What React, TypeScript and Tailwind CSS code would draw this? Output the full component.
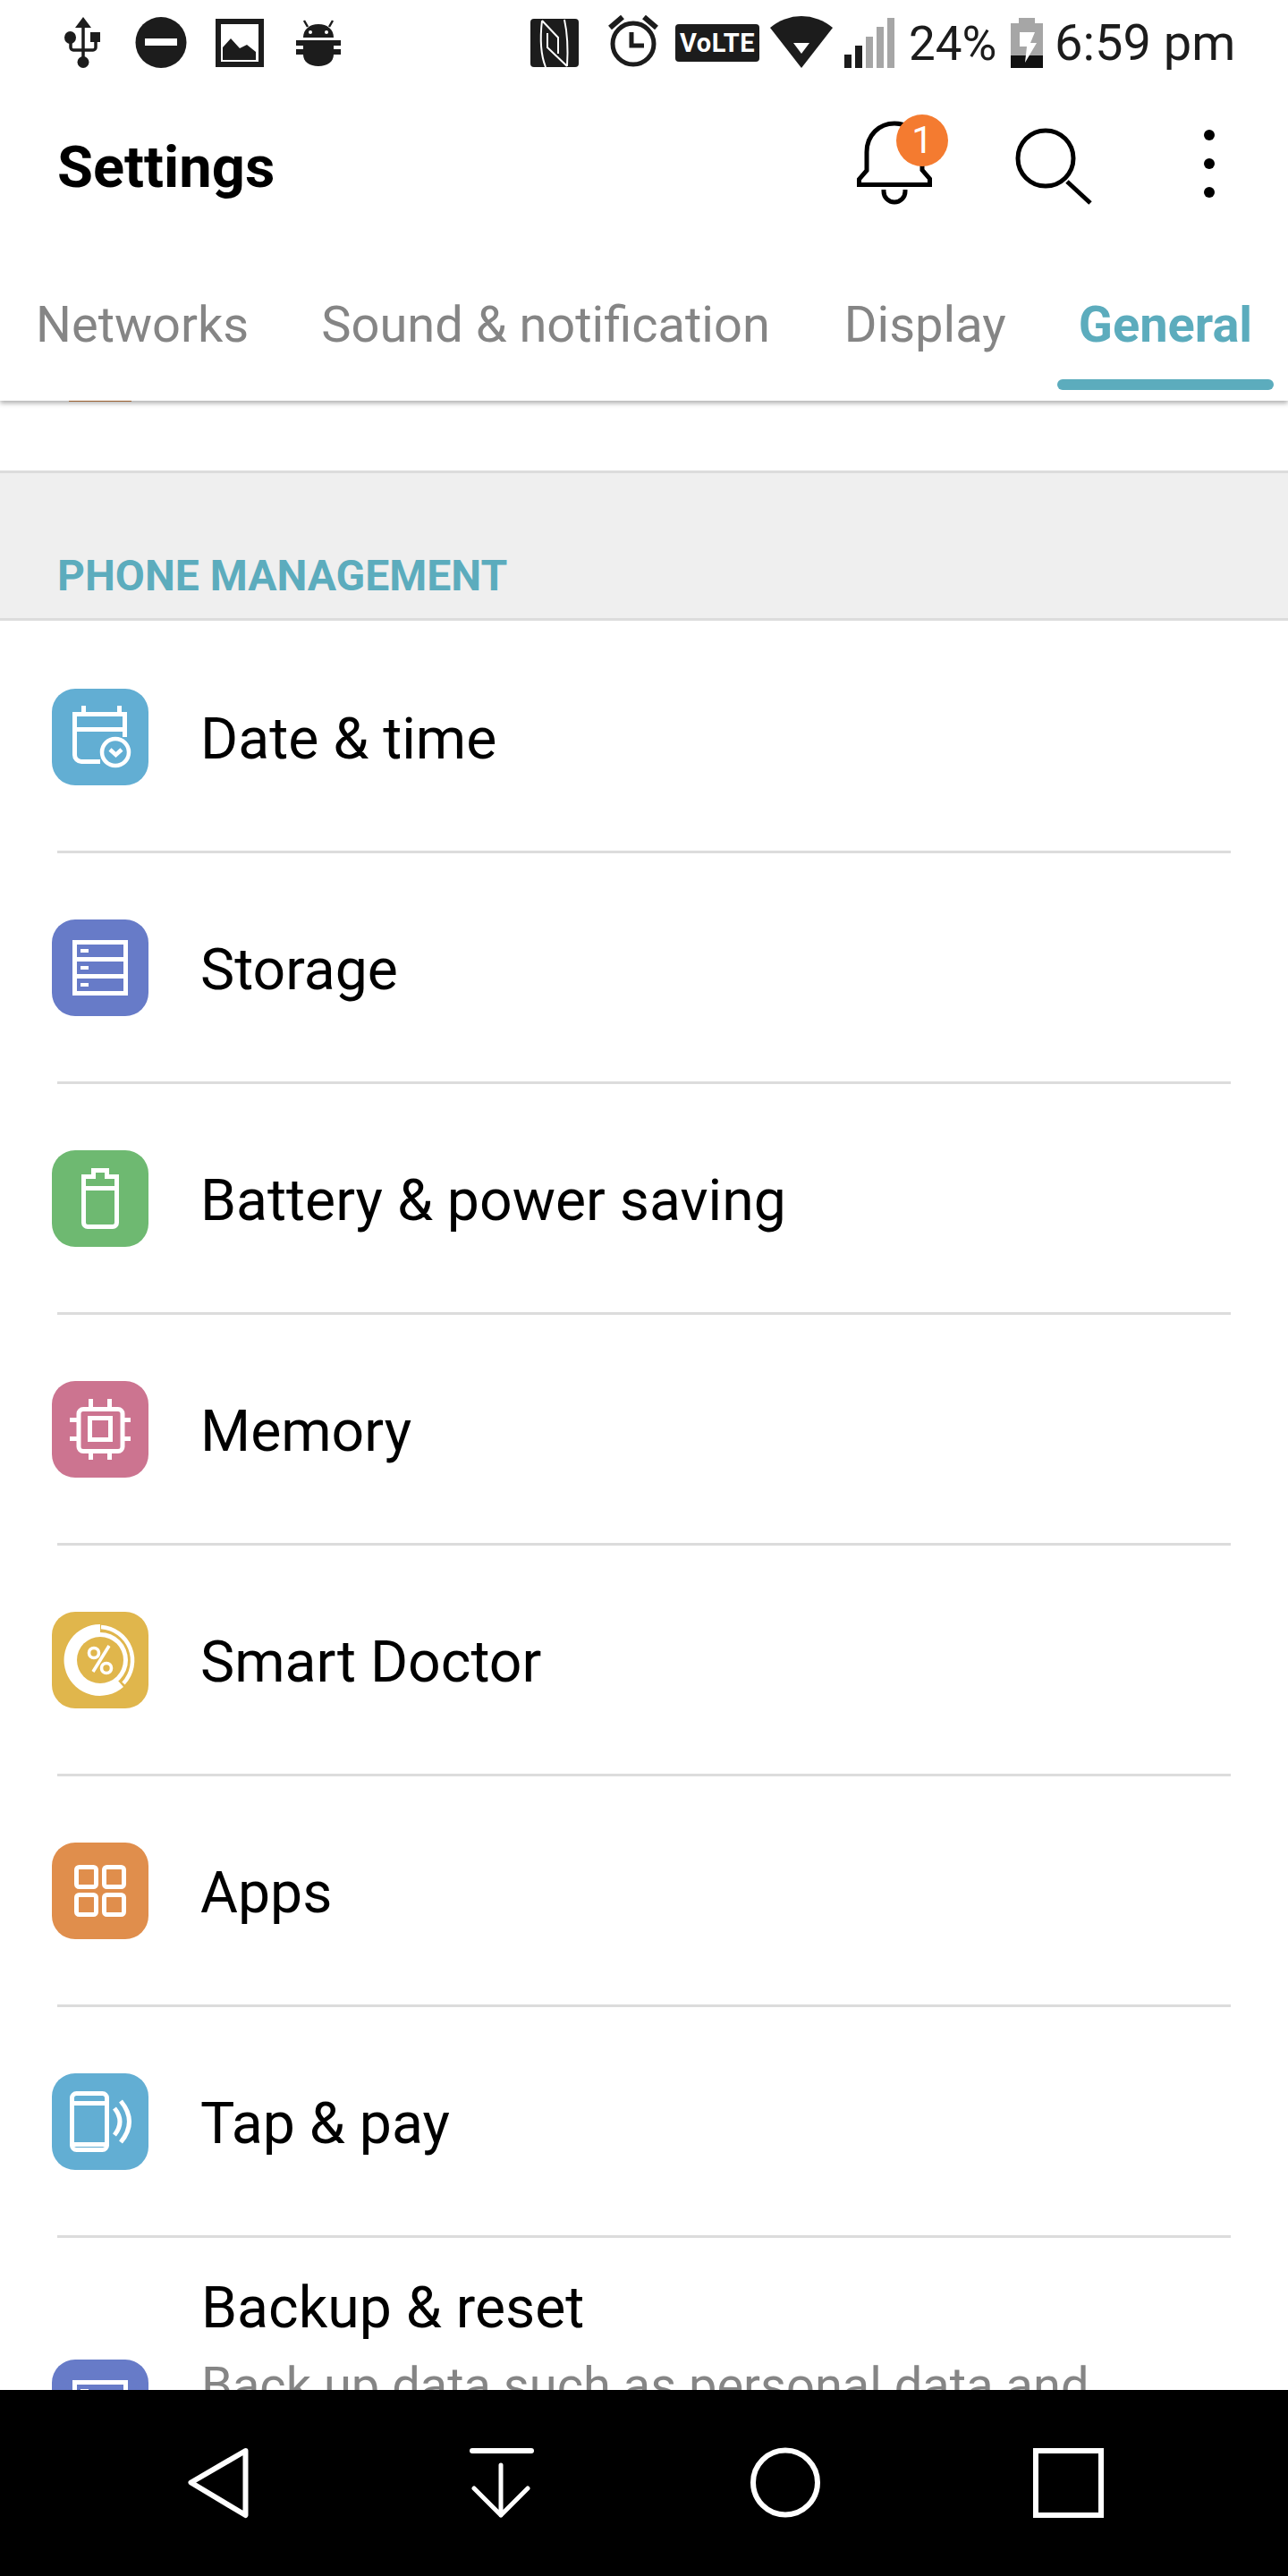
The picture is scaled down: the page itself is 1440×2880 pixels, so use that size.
import React from "react";

const ROBOTO = "font-['Roboto',sans-serif]";

function IconBox({ color, children }: { color: string; children: React.ReactNode }) {
  return (
    <div className="w-[108px] h-[108px] rounded-[26px] shrink-0" style={{ backgroundColor: color }}>
      <svg viewBox="0 0 108 108" width="108" height="108" fill="none" stroke="#fff" strokeWidth="5">
        {children}
      </svg>
    </div>
  );
}

const DateIcon = (
  <>
    <path d="M35.5 19v9M75.500 19v9" />
    <path d="M81.500 54V28.500H25.500V74a7.500 7.500 0 0 0 7.500 7.500H54" />
    <path d="M26 45.500h55" />
    <circle cx="71" cy="71" r="15" strokeWidth="4.500" />
    <path d="M65 68l6.500 6 6.500-6" strokeWidth="4.500" />
  </>
);
const StorageIcon = (
  <>
    <rect x="25.500" y="25.500" width="57" height="57" />
    <path d="M26 44.500h56M26 63.500h56" />
    <path d="M32 35h9M32 54h9M32 73h9" strokeWidth="4" />
  </>
);
const BatteryIcon = (
  <>
    <path d="M35.500 29.500h11v-7h15v7h11V81a4.500 4.500 0 0 1-4.500 4.500H40a4.500 4.500 0 0 1-4.500-4.500z" />
    <path d="M36 42.500h36" />
  </>
);
const MemoryIcon = (
  <>
    <rect x="30" y="31.500" width="49" height="47" rx="5" />
    <rect x="42.500" y="41.500" width="23" height="24" />
    <path d="M43.500 20v10M64.500 20v10M43.500 78v10M64.500 78v10M20 43.500h10M20 64.500h10M79 43.500h9M79 64.500h9" />
  </>
);
const DoctorIcon = (
  <>
    <path d="M54 14A40 40 0 1 0 80 84L54 54z" fill="#fff" stroke="none" />
    <circle cx="54" cy="54" r="31" fill="#fff" stroke="none" />
    <path d="M55 17a37.500 37.500 0 0 1 25 63" strokeWidth="4.500" />
    <circle cx="54" cy="54" r="26" fill="#e0b64c" stroke="none" />
    <circle cx="47" cy="46" r="5.500" strokeWidth="3.600" />
    <circle cx="61" cy="63" r="5.500" strokeWidth="3.600" />
    <path d="M64 38L46 67" strokeWidth="3.600" />
  </>
);
const AppsIcon = (
  <>
    <rect x="27.500" y="27.500" width="22" height="22" rx="3" />
    <rect x="58.500" y="27.500" width="22" height="22" rx="3" />
    <rect x="27.500" y="58.500" width="22" height="22" rx="3" />
    <rect x="58.500" y="58.500" width="22" height="22" rx="3" />
  </>
);
const TapIcon = (
  <>
    <rect x="22.500" y="22.500" width="39" height="63" rx="5" />
    <path d="M23 33.500h38M23 79.500h38" />
    <path d="M70 39Q82 54 70 69" />
    <path d="M77 31Q96 54 77 77" />
  </>
);

const rows = [
  { label: "Date & time", color: "#62aed3", icon: DateIcon },
  { label: "Storage", color: "#677bc8", icon: StorageIcon },
  { label: "Battery & power saving", color: "#6eb971", icon: BatteryIcon },
  { label: "Memory", color: "#cc7490", icon: MemoryIcon },
  { label: "Smart Doctor", color: "#e0b64c", icon: DoctorIcon },
  { label: "Apps", color: "#e08e4c", icon: AppsIcon },
  { label: "Tap & pay", color: "#62aed3", icon: TapIcon },
];

function StatusBar() {
  return (
    <div className="relative h-[96px] shrink-0">
      <svg className="absolute left-0 top-0" width="1000" height="96" viewBox="0 0 1000 96" fill="#1c1c1c">
        {/* usb */}
        <path d="M93 24V66" stroke="#1c1c1c" strokeWidth="3.500" fill="none" />
        <path d="M93 19l-9 12h18z" />
        <ellipse cx="93" cy="69.500" rx="6.500" ry="6.500" />
        <ellipse cx="78.500" cy="42" rx="6.500" ry="7" />
        <rect x="101" y="36" width="11" height="11" />
        <path d="M79 48v5a3 3 0 0 0 3 3h22a3 3 0 0 0 3-3v-6" stroke="#1c1c1c" strokeWidth="3.500" fill="none" />
        {/* dnd */}
        <circle cx="180" cy="47.500" r="28.500" />
        <rect x="162" y="43" width="36" height="8" fill="#fff" />
        {/* image */}
        <rect x="241" y="21" width="54" height="54" />
        <rect x="247" y="27" width="42" height="42" fill="#fff" />
        <path d="M249 53l9-10 10 11 8-4 10 8v9h-37z" />
        {/* android */}
        <path d="M339 42c0-9 7-15 17-15s17 6 17 15z" />
        <path d="M340 23l4 7M372 23l-4 7" stroke="#1c1c1c" strokeWidth="2.500" />
        <circle cx="347" cy="36" r="2" fill="#fff" />
        <circle cx="365" cy="36" r="2" fill="#fff" />
        <path d="M331 45h50v6h-8v4h8v6h-8c0 8-7 13-17 13s-17-5-17-13h-8v-6h8v-4h-8z" />
        {/* nfc */}
        <rect x="593" y="21" width="54" height="54" rx="4" />
        <path d="M606 23L624 42V60M612 37V53L634 74M631 22C635 40 635 58 634 74M606 23C604 40 604 60 610 75" fill="none" stroke="#fff" strokeWidth="2" />
      </svg>
      <svg className="absolute left-[680px] top-0" width="60" height="96" viewBox="0 0 60 96" fill="none" stroke="#1c1c1c">
        <circle cx="28" cy="49" r="23" strokeWidth="5" />
        <path d="M26 36v15h14" strokeWidth="5" />
        <path d="M2 31l14-12M54 31l-14-12" strokeWidth="6" />
      </svg>
      <div className="absolute left-[755px] top-[27px] w-[94px] h-[42px] bg-[#1c1c1c] rounded-[4px] flex items-center justify-center">
        <span className={`${ROBOTO} text-white text-[29px] font-bold leading-none tracking-[0.5px]`}>VoLTE</span>
      </div>
      <svg className="absolute left-[860px] top-0" width="150" height="96" viewBox="0 0 150 96">
        <path d="M1 31a54 54 0 0 1 70 0L36 76z" fill="#1c1c1c" />
        <path d="M27 48h18l-9 12z" fill="#fff" />
        <rect x="84" y="61" width="8" height="15" fill="#1c1c1c" />
        <rect x="96" y="51" width="8" height="25" fill="#1c1c1c" />
        <rect x="108" y="41" width="8" height="35" fill="#a6a6a6" />
        <rect x="120" y="30" width="8" height="46" fill="#a6a6a6" />
        <rect x="132" y="20" width="8" height="56" fill="#a6a6a6" />
      </svg>
      <span className={`${ROBOTO} absolute left-[1016px] top-[18px] text-[53px] leading-[62px] font-normal text-[#1c1c1c]`}>24%</span>
      <svg className="absolute left-[1130px] top-0" width="36" height="96" viewBox="0 0 36 96">
        <path d="M9 20h18v6h9v50H0V26h9z" fill="#a6a6a6" />
        <path d="M0 62h36v14H0z" fill="#111" />
        <path d="M10 36h17l-5 12h7l-13 22 2-18h-8z" fill="#fff" />
      </svg>
      <span className={`${ROBOTO} absolute left-[1179px] top-[17px] text-[56px] leading-[62px] font-normal text-[#1c1c1c]`}>6:59 pm</span>
    </div>
  );
}

function AppBar() {
  return (
    <div className="relative h-[184px] shrink-0 flex items-center pl-[64px] pb-[2px]">
      <span className={`${ROBOTO} text-[65px] font-bold text-black leading-none`}>Settings</span>
      <svg className="absolute left-[950px] top-[30px]" width="300" height="110" viewBox="950 126 300 110" fill="none" stroke="#000" strokeWidth="5">
        <path d="M960.500 206.500v-6l8.500-10V170c0-19 14-32 31-32s31 13 31 32v20l8.500 10v6.500z" />
        <path d="M988 212v2a12 12 0 0 0 24 0v-2" />
        <circle cx="1169" cy="177" r="31" />
        <path d="M1193 203l26 24" />
      </svg>
      <div className="absolute left-[1346px] top-[49px] flex flex-col gap-[20px]">
        <div className="w-[12px] h-[12px] rounded-full bg-black" />
        <div className="w-[12px] h-[12px] rounded-full bg-black" />
        <div className="w-[12px] h-[12px] rounded-full bg-black" />
      </div>
      <div className="absolute left-[1002px] top-[32px] w-[58px] h-[58px] rounded-full bg-[#f47b30] flex items-center justify-center">
        <span className={`${ROBOTO} text-white text-[42px] font-normal leading-none`}>1</span>
      </div>
    </div>
  );
}

function Tabs() {
  const gray = `${ROBOTO} text-[56px] text-[#858585] leading-none`;
  return (
    <div className="relative h-[168px] shrink-0 flex items-start pt-[55px] pl-[40px]">
      <span className={gray}>Networks</span>
      <span className={`${gray} ml-[81px]`}>Sound &amp; notification</span>
      <span className={`${gray} ml-[83px]`}>Display</span>
      <span className={`${ROBOTO} text-[56px] font-bold text-[#5cacbd] leading-none ml-[81px]`}>General</span>
      <div className="absolute left-[1182px] top-[144px] w-[242px] h-[12px] rounded-full bg-[#5cacbd]" />
    </div>
  );
}

function Row({ label, color, icon }: { label: string; color: string; icon: React.ReactNode }) {
  return (
    <div className="h-[258px] shrink-0 flex items-center border-b-[3px] border-[#dcdcdc] mx-[64px]">
      <div className="-ml-[6px]">
        <IconBox color={color}>{icon}</IconBox>
      </div>
      <span className={`${ROBOTO} ml-[58px] pt-[6px] text-[64.300px] text-black leading-none`}>{label}</span>
    </div>
  );
}

export default function App() {
  return (
    <div className="w-[1440px] h-[2880px] flex flex-col bg-white overflow-hidden">
      <div className="relative z-10 bg-white shadow-[0_3px_5px_rgba(0,0,0,0.3)] shrink-0">
        <StatusBar />
        <AppBar />
        <Tabs />
      </div>
      <div className="flex-1 overflow-hidden min-h-0 flex flex-col">
        <div className="h-[78px] shrink-0">
          <div className="ml-[77px] w-[70px] h-[1px] bg-[#d08040]" />
        </div>
        <div className="h-[168px] shrink-0 bg-[#efefef] border-y-[3px] border-[#dcdcdc] pl-[64px] flex items-end pb-[23px]">
          <span className={`${ROBOTO} text-[48px] font-bold text-[#5cacbd] leading-none`}>PHONE MANAGEMENT</span>
        </div>
        <div className="h-[2px] shrink-0" />
        {rows.map((r) => (
          <Row key={r.label} {...r} />
        ))}
        <div className="relative ml-[225px] pt-[46px]">
          <div className={`${ROBOTO} text-[64.300px] text-black leading-none`}>Backup &amp; reset</div>
          <div className={`${ROBOTO} text-[56px] text-[#858585] leading-none mt-[27px] whitespace-nowrap`}>Back up data such as personal data and</div>
          <div className="absolute -left-[167px] top-[136px]">
            <IconBox color="#677bc8">{StorageIcon}</IconBox>
          </div>
        </div>
      </div>
      <div className="h-[208px] shrink-0 bg-black relative">
        <svg className="absolute inset-0" width="1440" height="208" viewBox="0 0 1440 208" fill="none" stroke="#fff" strokeWidth="6" strokeLinejoin="round" strokeLinecap="round">
          <path d="M274.500 68L213.500 103.500L274.500 140z" />
          <path d="M528 68h66" />
          <path d="M560 84v56M530 110l30 30 30-30" strokeWidth="5" />
          <circle cx="878" cy="103.500" r="36" />
          <rect x="1158" y="68" width="73" height="72" strokeLinejoin="miter" />
        </svg>
      </div>
    </div>
  );
}
